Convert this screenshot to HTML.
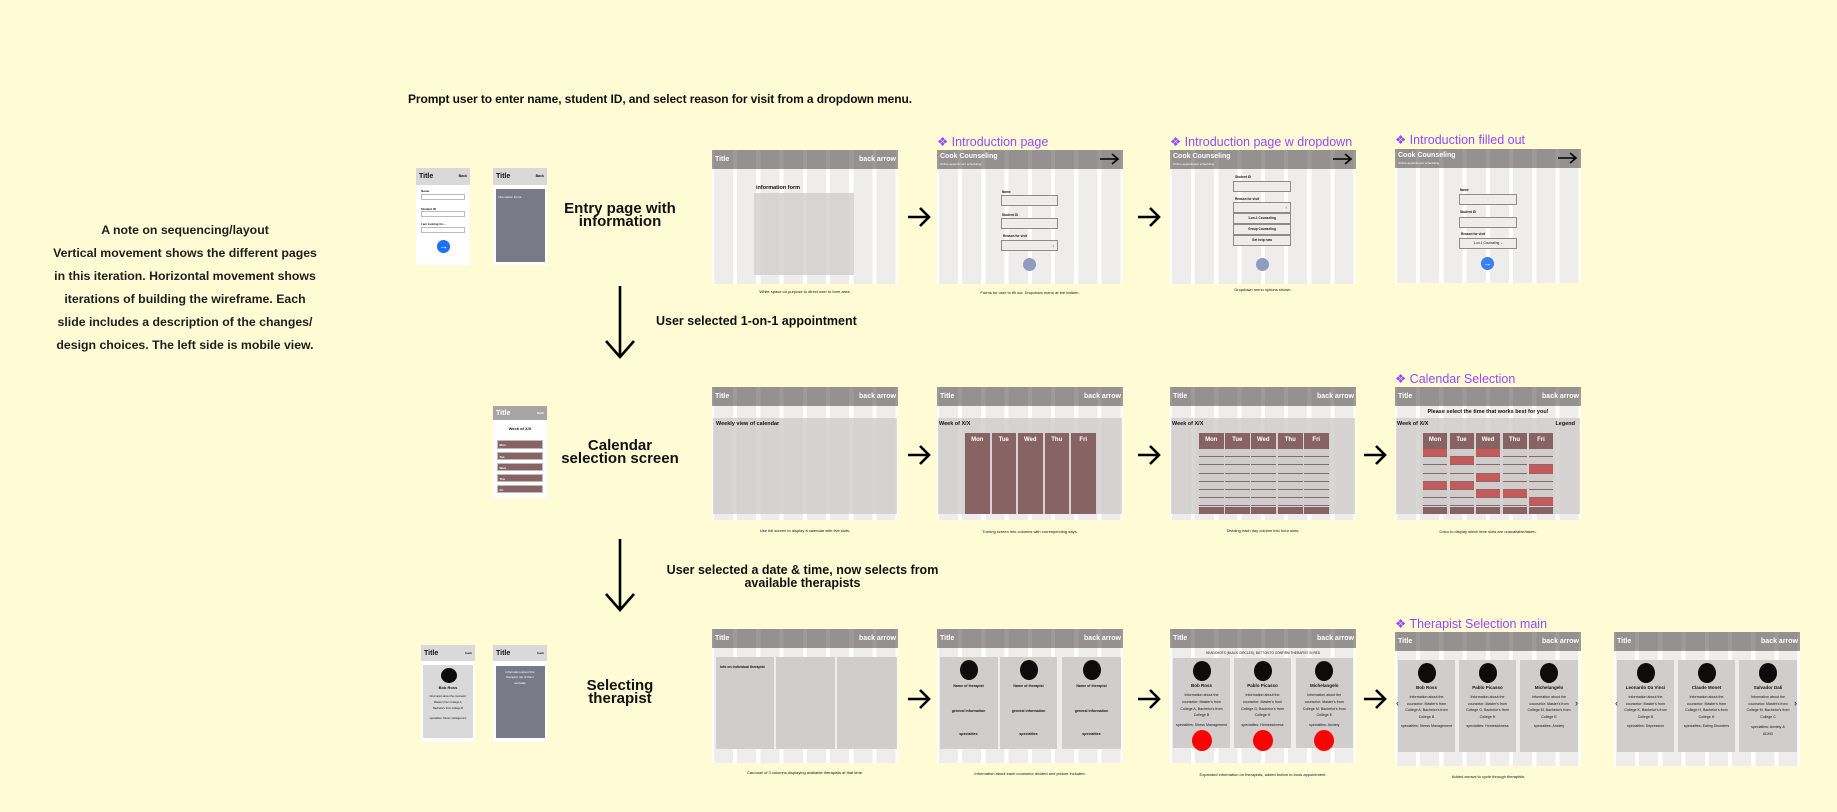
<!DOCTYPE html>
<html><head><meta charset="utf-8"><style>
*{box-sizing:border-box;margin:0;padding:0}
body{width:1837px;height:812px;background:#fffcd5;position:relative;overflow:hidden;font-family:"Liberation Sans",sans-serif;color:#111}
.a{position:absolute}
.fr{position:absolute;width:186px;height:134px;background:repeating-linear-gradient(90deg,#efecec 0 19px,#fff 19px 23.25px);background-position:2px 0}
.hd{position:absolute;left:0;top:0;width:100%;height:19px;background:#959190;color:#fff;font-weight:bold;font-size:7px}
.hd:after{content:"";position:absolute;inset:0;background:repeating-linear-gradient(90deg,rgba(255,255,255,0) 0 19px,rgba(255,255,255,.08) 19px 23.25px);background-position:2px 0}
.hd .l{position:absolute;left:3px;top:6px}
.hd .r{position:absolute;right:2px;top:6px}
.hd svg{position:absolute;right:3px;top:3px;z-index:1}
.cap{position:absolute;font-size:4px;text-align:center;white-space:nowrap;transform:translateX(-50%)}
.lbl{position:absolute;color:#9747ff;font-size:12.5px;white-space:nowrap}
.t{position:absolute;font-size:4px;font-weight:bold;white-space:nowrap}
.box{position:absolute;border:1px solid #8f8c8c;background:#efecec}
.big{position:absolute;font-weight:bold;font-size:15px;line-height:13px;text-align:center;white-space:nowrap;transform:translateX(-50%)}
.mob{position:absolute;width:54px;background:#fff}
.mh{position:absolute;left:0;top:0;width:100%;background:#d9d9d9;font-weight:bold;font-size:7px}
.card{position:absolute;background:#d0cdcc}
.dot{position:absolute;border-radius:50%;background:#0d0b0b}
.red{position:absolute;border-radius:50%;background:#f00}
.ct{position:absolute;left:0;width:100%;text-align:center;font-size:3.6px;white-space:nowrap}
.ct.n{font-size:4.5px;font-weight:bold}
.col{position:absolute;background:#876463;color:#fff;font-weight:bold;font-size:6px;text-align:center}
.slot{position:absolute;left:0;width:100%;height:8.2px;background:#d0cccc;border-bottom:1px solid #8a6a69;font-size:2px;padding:1px}
.slot.rd{background:#c45b5a}
</style></head><body>

<div class="a" style="left:408px;top:92px;font-size:12px;font-weight:bold;letter-spacing:-0.1px;white-space:nowrap">Prompt user to enter name, student ID, and select reason for visit from a dropdown menu.</div>

<div class="a" style="left:0;width:370px;top:219px;text-align:center;font-size:12.3px;font-weight:bold;line-height:22.9px;color:#1e1e1e">A note on sequencing/layout<br>Vertical movement shows the different pages<br>in this iteration. Horizontal movement shows<br>iterations of building the wireframe. Each<br>slide includes a description of the changes/<br>design choices. The left side is mobile view.</div>

<svg class="a" style="left:0;top:0" width="1837" height="812">
<g stroke="#000" stroke-width="2.6" fill="none">
<path d="M620 286V356M606 341L620 357L634 341"/>
<path d="M620 539V609M606 594L620 610L634 594"/>
<path d="M908 217H928M920 208L929 217L920 226"/>
<path d="M1138 217H1158M1150 208L1159 217L1150 226"/>
<path d="M908 455H928M920 446L929 455L920 464"/>
<path d="M1138 455H1158M1150 446L1159 455L1150 464"/>
<path d="M1364 455H1384M1376 446L1385 455L1376 464"/>
<path d="M908 699H928M920 690L929 699L920 708"/>
<path d="M1138 699H1158M1150 690L1159 699L1150 708"/>
<path d="M1364 699H1384M1376 690L1385 699L1376 708"/>
</g></svg>

<div class="a" style="left:656px;top:314px;font-size:12.5px;font-weight:bold;white-space:nowrap">User selected 1-on-1 appointment</div>
<div class="a" style="left:640px;top:564px;width:325px;text-align:center;font-size:12.5px;font-weight:bold;line-height:12.5px">User selected a date &amp; time, now selects from<br>available therapists</div>

<div class="big" style="left:620px;top:202px">Entry page with<br>information</div>
<div class="big" style="left:620px;top:439px">Calendar<br>selection screen</div>
<div class="big" style="left:620px;top:679px">Selecting<br>therapist</div>

<!-- ROW 1 mobile -->
<div class="mob" style="left:416px;top:168px;height:97px">
 <div class="mh" style="height:17px"><span class="a" style="left:3px;top:5px">Title</span><span class="a" style="right:3px;top:6px;font-size:3.5px">Back</span></div>
 <div class="t" style="left:5px;top:21px;font-size:3px">Name</div>
 <div class="box" style="left:5px;top:26px;width:44px;height:6px;background:#fff;border-color:#bbb"></div>
 <div class="t" style="left:5px;top:39px;font-size:3px">Student ID</div>
 <div class="box" style="left:5px;top:43px;width:44px;height:6px;background:#fff;border-color:#bbb"></div>
 <div class="t" style="left:5px;top:54px;font-size:3px">I am looking for...</div>
 <div class="box" style="left:5px;top:59px;width:44px;height:6px;background:#fff;border-color:#bbb"></div>
 <div class="a" style="left:21px;top:72px;width:13px;height:13px;border-radius:50%;background:#1a6ff5;color:#fff;font-size:9px;text-align:center;line-height:13px;font-weight:bold">→</div>
</div>
<div class="mob" style="left:493px;top:168px;height:97px">
 <div class="mh" style="height:17px"><span class="a" style="left:3px;top:5px">Title</span><span class="a" style="right:3px;top:6px;font-size:3.5px">Back</span></div>
 <div class="a" style="left:3px;top:21px;width:48.5px;height:73px;background:#787b87;color:#fff;font-size:3px;padding:6px 2px">Information forms</div>
</div>

<div class="fr" style="left:712px;top:150px">
 <div class="hd"><span class="l">Title</span><span class="r">back arrow</span></div>
 <div class="t" style="left:44px;top:35px;font-size:5.5px">information form</div>
 <div class="a" style="left:42px;top:43px;width:100px;height:82px;background:rgba(210,206,206,.8)"></div>
</div>
<div class="cap" style="left:805px;top:289px">White space on purpose to direct user to form area.</div>

<div class="lbl" style="left:937px;top:134px">❖ Introduction page</div>
<div class="fr" style="left:937px;top:150px">
 <div class="hd"><span class="l" style="top:3px">Cook Counseling<br><span style="font-size:3px;font-weight:normal">Online appointment scheduling</span></span><svg width="20" height="12"><path d="M0 6H18M12 1L18 6L12 11" stroke="#000" stroke-width="1.6" fill="none"/></svg></div>
 <div class="t" style="left:65px;top:40px;font-size:3.2px">Name</div>
 <div class="box" style="left:64px;top:45px;width:57px;height:11px"></div>
 <div class="t" style="left:65px;top:63px;font-size:3.2px">Student ID</div>
 <div class="box" style="left:64px;top:68px;width:57px;height:11px"></div>
 <div class="t" style="left:66px;top:84px;font-size:3.2px">Reason for visit</div>
 <div class="box" style="left:64px;top:90px;width:57px;height:11px"><span class="a" style="right:3px;top:2px;font-size:4px">↓</span></div>
 <div class="a" style="left:86px;top:108px;width:13px;height:13px;border-radius:50%;background:#8e9dbf"></div>
</div>
<div class="cap" style="left:1030px;top:290px">Forms for user to fill out. Dropdown menu at the bottom.</div>

<div class="lbl" style="left:1170px;top:134px">❖ Introduction page w dropdown</div>
<div class="fr" style="left:1170px;top:150px">
 <div class="hd"><span class="l" style="top:3px">Cook Counseling<br><span style="font-size:3px;font-weight:normal">Online appointment scheduling</span></span><svg width="20" height="12"><path d="M0 6H18M12 1L18 6L12 11" stroke="#000" stroke-width="1.6" fill="none"/></svg></div>
 <div class="t" style="left:65px;top:25px;font-size:3.2px">Student ID</div>
 <div class="box" style="left:63px;top:31px;width:58px;height:11px"></div>
 <div class="t" style="left:65px;top:47px;font-size:3.2px">Reason for visit</div>
 <div class="box" style="left:63px;top:52px;width:58px;height:11px"><span class="a" style="right:3px;top:2px;font-size:4px">↑</span></div>
 <div class="box" style="left:63px;top:63px;width:58px;height:11px;font-size:3.2px;font-weight:bold;text-align:center;line-height:9px">1-on-1 Counseling</div>
 <div class="box" style="left:63px;top:74px;width:58px;height:11px;font-size:3.2px;font-weight:bold;text-align:center;line-height:9px">Group Counseling</div>
 <div class="box" style="left:63px;top:85px;width:58px;height:11px;font-size:3.2px;font-weight:bold;text-align:center;line-height:9px">Get help now</div>
 <div class="a" style="left:86px;top:108px;width:13px;height:13px;border-radius:50%;background:#8e9dbf"></div>
</div>
<div class="cap" style="left:1263px;top:287px">Dropdown menu options shown.</div>

<div class="lbl" style="left:1395px;top:132px">❖ Introduction filled out</div>
<div class="fr" style="left:1395px;top:149px">
 <div class="hd"><span class="l" style="top:3px">Cook Counseling<br><span style="font-size:3px;font-weight:normal">Online appointment scheduling</span></span><svg width="20" height="12"><path d="M0 6H18M12 1L18 6L12 11" stroke="#000" stroke-width="1.6" fill="none"/></svg></div>
 <div class="t" style="left:65px;top:39px;font-size:3.2px">Name</div>
 <div class="box" style="left:64px;top:45px;width:58px;height:11px"></div>
 <div class="t" style="left:65px;top:61px;font-size:3.2px">Student ID</div>
 <div class="box" style="left:64px;top:68px;width:58px;height:11px"></div>
 <div class="t" style="left:66px;top:83px;font-size:3.2px">Reason for visit</div>
 <div class="box" style="left:64px;top:89px;width:58px;height:11px;font-size:3.2px;text-align:center;line-height:9px">1-on-1 Counseling &nbsp;↓</div>
 <div class="a" style="left:86px;top:108px;width:13px;height:13px;border-radius:50%;background:#3a7ff0;color:#fff;font-size:8px;text-align:center;line-height:13px">→</div>
</div>

<!-- ROW 2 mobile -->
<div class="mob" style="left:493px;top:406px;height:92px">
 <div class="mh" style="height:14px;background:#a7a5a5;color:#fff"><span class="a" style="left:3px;top:4px">Title</span><span class="a" style="right:3px;top:5px;font-size:3px">Back</span></div>
 <div class="a" style="left:0;width:100%;top:20px;text-align:center;font-size:4px;font-weight:bold">Week of X/X</div>
 <div class="col" style="left:3.5px;top:34px;width:46.5px;height:9px;text-align:left;font-size:3px;padding:2px;border:1px solid #bbb">Mon</div>
 <div class="col" style="left:3.5px;top:45.7px;width:46.5px;height:8.5px;text-align:left;font-size:3px;padding:2px;border:1px solid #bbb">Tue</div>
 <div class="col" style="left:3.5px;top:57px;width:46.5px;height:8px;text-align:left;font-size:3px;padding:2px;border:1px solid #bbb">Wed</div>
 <div class="col" style="left:3.5px;top:68px;width:46.5px;height:8px;text-align:left;font-size:3px;padding:2px;border:1px solid #bbb">Thu</div>
 <div class="col" style="left:3.5px;top:78.7px;width:46.5px;height:8px;text-align:left;font-size:3px;padding:2px;border:1px solid #bbb">Fri</div>
</div>

<div class="fr" style="left:712px;top:387px;height:133px">
 <div class="hd"><span class="l">Title</span><span class="r">back arrow</span></div>
 <div class="a" style="left:1px;top:31px;width:184px;height:96px;background:rgba(208,204,204,.8)"></div>
 <div class="t" style="left:4px;top:34px;font-size:5.5px">Weekly view of calendar</div>
</div>
<div class="cap" style="left:805px;top:528px">Use full screen to display a calendar with five slots.</div>

<div class="fr" style="left:937px;top:387px;height:133px">
 <div class="hd"><span class="l">Title</span><span class="r">back arrow</span></div>
 <div class="a" style="left:1px;top:31px;width:184px;height:96px;background:rgba(208,204,204,.8)"></div>
 <div class="t" style="left:2px;top:34px;font-size:5.5px">Week of X/X</div>
 <div class="col" style="left:28px;top:46px;width:24.5px;height:81px;padding-top:4px">Mon</div>
 <div class="col" style="left:54.5px;top:46px;width:24.5px;height:81px;padding-top:4px">Tue</div>
 <div class="col" style="left:81px;top:46px;width:24.5px;height:81px;padding-top:4px">Wed</div>
 <div class="col" style="left:107.5px;top:46px;width:24.5px;height:81px;padding-top:4px">Thu</div>
 <div class="col" style="left:134px;top:46px;width:24.5px;height:81px;padding-top:4px">Fri</div>
</div>
<div class="cap" style="left:1030px;top:529px">Turning screen into columns with corresponding days.</div>

<div class="fr" style="left:1170px;top:387px;height:133px">
 <div class="hd"><span class="l">Title</span><span class="r">back arrow</span></div>
 <div class="a" style="left:1px;top:31px;width:184px;height:96px;background:rgba(208,204,204,.8)"></div>
 <div class="t" style="left:2px;top:34px;font-size:5.5px">Week of X/X</div>
 <div class="a" style="left:29px;top:46px;width:24.5px;height:81px"><div class="col" style="left:0;top:0;width:100%;height:16px;padding-top:4px">Mon</div><div class="slot" style="top:16px"></div><div class="slot" style="top:24.2px"></div><div class="slot" style="top:32.4px"></div><div class="slot" style="top:40.6px"></div><div class="slot" style="top:48.8px"></div><div class="slot" style="top:57px"></div><div class="slot" style="top:65.2px"></div><div class="col" style="left:0;top:74px;width:100%;height:7px"></div></div>
 <div class="a" style="left:55px;top:46px;width:24.5px;height:81px"><div class="col" style="left:0;top:0;width:100%;height:16px;padding-top:4px">Tue</div><div class="slot" style="top:16px"></div><div class="slot" style="top:24.2px"></div><div class="slot" style="top:32.4px"></div><div class="slot" style="top:40.6px"></div><div class="slot" style="top:48.8px"></div><div class="slot" style="top:57px"></div><div class="slot" style="top:65.2px"></div><div class="col" style="left:0;top:74px;width:100%;height:7px"></div></div>
 <div class="a" style="left:81px;top:46px;width:24.5px;height:81px"><div class="col" style="left:0;top:0;width:100%;height:16px;padding-top:4px">Wed</div><div class="slot" style="top:16px"></div><div class="slot" style="top:24.2px"></div><div class="slot" style="top:32.4px"></div><div class="slot" style="top:40.6px"></div><div class="slot" style="top:48.8px"></div><div class="slot" style="top:57px"></div><div class="slot" style="top:65.2px"></div><div class="col" style="left:0;top:74px;width:100%;height:7px"></div></div>
 <div class="a" style="left:108px;top:46px;width:24.5px;height:81px"><div class="col" style="left:0;top:0;width:100%;height:16px;padding-top:4px">Thu</div><div class="slot" style="top:16px"></div><div class="slot" style="top:24.2px"></div><div class="slot" style="top:32.4px"></div><div class="slot" style="top:40.6px"></div><div class="slot" style="top:48.8px"></div><div class="slot" style="top:57px"></div><div class="slot" style="top:65.2px"></div><div class="col" style="left:0;top:74px;width:100%;height:7px"></div></div>
 <div class="a" style="left:134px;top:46px;width:24.5px;height:81px"><div class="col" style="left:0;top:0;width:100%;height:16px;padding-top:4px">Fri</div><div class="slot" style="top:16px"></div><div class="slot" style="top:24.2px"></div><div class="slot" style="top:32.4px"></div><div class="slot" style="top:40.6px"></div><div class="slot" style="top:48.8px"></div><div class="slot" style="top:57px"></div><div class="slot" style="top:65.2px"></div><div class="col" style="left:0;top:74px;width:100%;height:7px"></div></div>
</div>
<div class="cap" style="left:1263px;top:528px">Dividing each day column into hour slots.</div>

<div class="lbl" style="left:1395px;top:371px">❖ Calendar Selection</div>
<div class="fr" style="left:1395px;top:387px;height:133px">
 <div class="hd"><span class="l">Title</span><span class="r">back arrow</span></div>
 <div class="a" style="left:0;width:100%;top:22px;text-align:center;font-size:5.5px;font-weight:bold">Please select the time that works best for you!</div>
 <div class="a" style="left:1px;top:31px;width:184px;height:96px;background:rgba(208,204,204,.8)"></div>
 <div class="t" style="left:2px;top:34px;font-size:5.5px">Week of X/X</div>
 <div class="t" style="right:6px;top:34px;font-size:5.5px">Legend</div>
 <div class="a" style="left:28px;top:46px;width:24px;height:81px"><div class="col" style="left:0;top:0;width:100%;height:16px;padding-top:4px">Mon</div><div class="slot rd" style="top:16px"></div><div class="slot" style="top:24.2px"></div><div class="slot" style="top:32.4px"></div><div class="slot" style="top:40.6px"></div><div class="slot rd" style="top:48.8px"></div><div class="slot" style="top:57px"></div><div class="slot" style="top:65.2px"></div><div class="col" style="left:0;top:74px;width:100%;height:7px"></div></div>
 <div class="a" style="left:54.5px;top:46px;width:24px;height:81px"><div class="col" style="left:0;top:0;width:100%;height:16px;padding-top:4px">Tue</div><div class="slot" style="top:16px"></div><div class="slot rd" style="top:24.2px"></div><div class="slot" style="top:32.4px"></div><div class="slot" style="top:40.6px"></div><div class="slot rd" style="top:48.8px"></div><div class="slot" style="top:57px"></div><div class="slot" style="top:65.2px"></div><div class="col" style="left:0;top:74px;width:100%;height:7px"></div></div>
 <div class="a" style="left:81px;top:46px;width:24px;height:81px"><div class="col" style="left:0;top:0;width:100%;height:16px;padding-top:4px">Wed</div><div class="slot rd" style="top:16px"></div><div class="slot" style="top:24.2px"></div><div class="slot" style="top:32.4px"></div><div class="slot rd" style="top:40.6px"></div><div class="slot" style="top:48.8px"></div><div class="slot rd" style="top:57px"></div><div class="slot" style="top:65.2px"></div><div class="col" style="left:0;top:74px;width:100%;height:7px"></div></div>
 <div class="a" style="left:107.5px;top:46px;width:24px;height:81px"><div class="col" style="left:0;top:0;width:100%;height:16px;padding-top:4px">Thu</div><div class="slot" style="top:16px"></div><div class="slot" style="top:24.2px"></div><div class="slot" style="top:32.4px"></div><div class="slot" style="top:40.6px"></div><div class="slot" style="top:48.8px"></div><div class="slot rd" style="top:57px"></div><div class="slot" style="top:65.2px"></div><div class="col" style="left:0;top:74px;width:100%;height:7px"></div></div>
 <div class="a" style="left:134px;top:46px;width:24px;height:81px"><div class="col" style="left:0;top:0;width:100%;height:16px;padding-top:4px">Fri</div><div class="slot" style="top:16px"></div><div class="slot" style="top:24.2px"></div><div class="slot rd" style="top:32.4px"></div><div class="slot" style="top:40.6px"></div><div class="slot" style="top:48.8px"></div><div class="slot" style="top:57px"></div><div class="slot rd" style="top:65.2px"></div><div class="col" style="left:0;top:74px;width:100%;height:7px"></div></div>
</div>
<div class="cap" style="left:1488px;top:529px">Color to display which time slots are unavailable/taken.</div>

<!-- ROW 3 mobile -->
<div class="mob" style="left:421px;top:645px;height:97px">
 <div class="mh" style="height:16px"><span class="a" style="left:3px;top:5px">Title</span><span class="a" style="right:3px;top:6px;font-size:3px">back</span></div>
 <div class="a" style="left:2px;top:20px;width:50px;height:73px;background:#d9d9d9">
  <div class="dot" style="left:17.5px;top:2.5px;width:16px;height:15px"></div>
  <div class="ct n" style="top:20px;font-size:4px">Bob Ross</div>
  <div class="ct" style="top:29px;font-size:2.6px;line-height:6.2px">Information about the counselor:<br>Master's from College A,<br>Bachelor's from College B</div>
  <div class="ct" style="top:52px;font-size:2.6px">specialties: Stress management</div>
 </div>
</div>
<div class="mob" style="left:493px;top:645px;height:97px">
 <div class="mh" style="height:16px"><span class="a" style="left:3px;top:5px">Title</span><span class="a" style="right:3px;top:6px;font-size:3px">back</span></div>
 <div class="a" style="left:2.5px;top:20.7px;width:49px;height:72px;background:#787b87"><div class="ct" style="top:4px;color:#fff;font-size:3px;line-height:5.7px">Information about first<br>therapist, list of them<br>vertically</div></div>
</div>

<div class="fr" style="left:712px;top:629px">
 <div class="hd"><span class="l">Title</span><span class="r">back arrow</span></div>
 <div class="card" style="left:4px;top:28px;width:58px;height:92px"></div>
 <div class="card" style="left:64px;top:28px;width:59px;height:92px"></div>
 <div class="card" style="left:125px;top:28px;width:60px;height:92px"></div>
 <div class="t" style="left:8px;top:36px;font-size:3.5px">Info on individual therapist</div>
</div>
<div class="cap" style="left:805px;top:770px">Carousel of 3 columns displaying available therapists at that time.</div>

<div class="fr" style="left:937px;top:629px">
 <div class="hd"><span class="l">Title</span><span class="r">back arrow</span></div>
 <div class="card" style="left:2.5px;top:28px;width:58px;height:92px"><div class="dot" style="left:20px;top:3px;width:18px;height:20px"></div><div class="ct" style="top:27px;font-weight:bold">Name of therapist</div><div class="ct" style="top:52px;font-weight:bold">general information</div><div class="ct" style="top:75px;font-weight:bold">specialties</div></div>
 <div class="card" style="left:63px;top:28px;width:57px;height:92px"><div class="dot" style="left:19.5px;top:3px;width:18px;height:20px"></div><div class="ct" style="top:27px;font-weight:bold">Name of therapist</div><div class="ct" style="top:52px;font-weight:bold">general information</div><div class="ct" style="top:75px;font-weight:bold">specialties</div></div>
 <div class="card" style="left:125px;top:28px;width:59px;height:92px"><div class="dot" style="left:20.5px;top:3px;width:18px;height:20px"></div><div class="ct" style="top:27px;font-weight:bold">Name of therapist</div><div class="ct" style="top:52px;font-weight:bold">general information</div><div class="ct" style="top:75px;font-weight:bold">specialties</div></div>
</div>
<div class="cap" style="left:1030px;top:771px">Information about each counselor divided and picture included.</div>

<div class="fr" style="left:1170px;top:629px">
 <div class="hd"><span class="l">Title</span><span class="r">back arrow</span></div>
 <div class="ct" style="top:22px;font-size:3.2px">HEADSHOTS (BLACK CIRCLES), BUTTON TO CONFIRM THERAPIST IN RED</div>
 <div class="card" style="left:3px;top:29px;width:57px;height:90px"><div class="dot" style="left:19.5px;top:3px;width:18px;height:20px"></div><div class="ct n" style="top:25px">Bob Ross</div><div class="ct" style="top:34px;line-height:6.8px">Information about the<br>counselor: Master's from<br>College A, Bachelor's from<br>College B</div><div class="ct" style="top:65px">specialties: Stress Management</div><div class="red" style="left:18.5px;top:72px;width:20px;height:21px"></div></div>
 <div class="card" style="left:64px;top:29px;width:57px;height:90px"><div class="dot" style="left:19.5px;top:3px;width:18px;height:20px"></div><div class="ct n" style="top:25px">Pablo Picasso</div><div class="ct" style="top:34px;line-height:6.8px">Information about the<br>counselor: Master's from<br>College G, Bachelor's from<br>College H</div><div class="ct" style="top:65px">specialties: Homesickness</div><div class="red" style="left:18.5px;top:72px;width:20px;height:21px"></div></div>
 <div class="card" style="left:125.5px;top:29px;width:57.5px;height:90px"><div class="dot" style="left:19.5px;top:3px;width:18px;height:20px"></div><div class="ct n" style="top:25px">Michelangelo</div><div class="ct" style="top:34px;line-height:6.8px">Information about the<br>counselor: Master's from<br>College M, Bachelor's from<br>College E</div><div class="ct" style="top:65px">specialties: Anxiety</div><div class="red" style="left:18.5px;top:72px;width:20px;height:21px"></div></div>
</div>
<div class="cap" style="left:1263px;top:772px">Expanded information on therapists, added button to book appointment.</div>

<div class="lbl" style="left:1395px;top:616px">❖ Therapist Selection main</div>
<div class="fr" style="left:1395px;top:632px">
 <div class="hd"><span class="l">Title</span><span class="r">back arrow</span></div>
 <div class="card" style="left:3px;top:28px;width:57px;height:92px"><div class="dot" style="left:19.5px;top:3px;width:18px;height:20px"></div><div class="ct n" style="top:25px">Bob Ross</div><div class="ct" style="top:34px;line-height:6.6px">Information about the<br>counselor: Master's from<br>College A, Bachelor's from<br>College B</div><div class="ct" style="top:64px">specialties: Stress Management</div></div>
 <div class="card" style="left:64px;top:28px;width:57px;height:92px"><div class="dot" style="left:19.5px;top:3px;width:18px;height:20px"></div><div class="ct n" style="top:25px">Pablo Picasso</div><div class="ct" style="top:34px;line-height:6.6px">Information about the<br>counselor: Master's from<br>College G, Bachelor's from<br>College H</div><div class="ct" style="top:64px">specialties: Homesickness</div></div>
 <div class="card" style="left:125px;top:28px;width:58px;height:92px"><div class="dot" style="left:20px;top:3px;width:18px;height:20px"></div><div class="ct n" style="top:25px">Michelangelo</div><div class="ct" style="top:34px;line-height:6.6px">Information about the<br>counselor: Master's from<br>College M, Bachelor's from<br>College E</div><div class="ct" style="top:64px">specialties: Anxiety</div></div>
 <div class="a" style="left:1px;top:66px;font-size:9px">‹</div>
 <div class="a" style="left:180px;top:66px;font-size:9px">›</div>
</div>
<div class="cap" style="left:1488px;top:774px">Added arrows to cycle through therapists</div>

<div class="fr" style="left:1614px;top:632px">
 <div class="hd"><span class="l">Title</span><span class="r">back arrow</span></div>
 <div class="card" style="left:3px;top:28px;width:57px;height:92px"><div class="dot" style="left:19.5px;top:3px;width:18px;height:20px"></div><div class="ct n" style="top:25px">Leonardo Da Vinci</div><div class="ct" style="top:34px;line-height:6.6px">Information about the<br>counselor: Master's from<br>College K, Bachelor's from<br>College B</div><div class="ct" style="top:64px">specialties: Depression</div></div>
 <div class="card" style="left:64px;top:28px;width:57px;height:92px"><div class="dot" style="left:19.5px;top:3px;width:18px;height:20px"></div><div class="ct n" style="top:25px">Claude Monet</div><div class="ct" style="top:34px;line-height:6.6px">Information about the<br>counselor: Master's from<br>College H, Bachelor's from<br>College H</div><div class="ct" style="top:64px">specialties: Eating Disorders</div></div>
 <div class="card" style="left:125px;top:28px;width:58px;height:92px"><div class="dot" style="left:20px;top:3px;width:18px;height:20px"></div><div class="ct n" style="top:25px">Salvador Dali</div><div class="ct" style="top:34px;line-height:6.6px">Information about the<br>counselor: Master's from<br>College M, Bachelor's from<br>College C</div><div class="ct" style="top:64px;line-height:6.6px">specialties: Anxiety &amp;<br>ADHD</div></div>
 <div class="a" style="left:1px;top:66px;font-size:9px">‹</div>
 <div class="a" style="left:180px;top:66px;font-size:9px">›</div>
</div>

</body></html>
